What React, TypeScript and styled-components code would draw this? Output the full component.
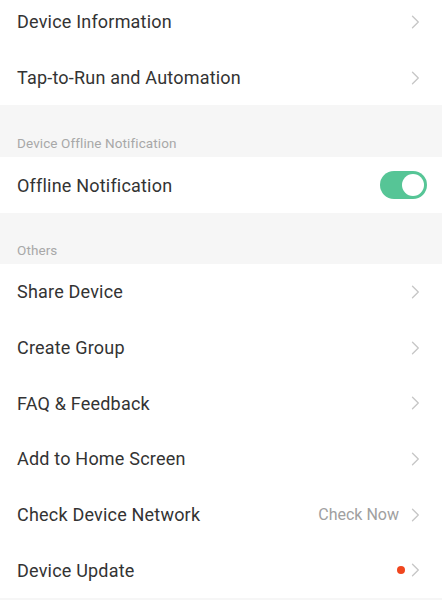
import styled, { createGlobalStyle } from 'styled-components';

const GlobalStyle = createGlobalStyle`
  html, body {
    margin: 0;
    padding: 0;
    background: #f6f6f6;
    font-family: Roboto, "Liberation Sans", Arial, sans-serif;
    overflow: hidden;
  }
`;

const Chevron = () => (
  <ChevronIcon width="9" height="14" viewBox="0 0 9 14" fill="none">
    <path d="M1.5 1.2L7.3 7L1.5 12.8" stroke="#c6c6c6" strokeWidth="1.3" strokeLinecap="round" strokeLinejoin="round" />
  </ChevronIcon>
);

type RowProps = {
  label: string;
  value?: string;
  dot?: boolean;
};

const SettingRow = ({ label, value, dot }: RowProps) => (
  <Row>
    <Label>{label}</Label>
    <Trail>
      {value && <Value>{value}</Value>}
      {dot && <Dot />}
      <Chevron />
    </Trail>
  </Row>
);

const App = () => {
  return (
    <>
      <GlobalStyle />
      <Page>
        <Group>
          <SettingRow label="Device Information" />
          <SettingRow label="Tap-to-Run and Automation" />
        </Group>
        <SectionHeader $height={52}>Device Offline Notification</SectionHeader>
        <Group>
          <Row>
            <Label>Offline Notification</Label>
            <Toggle $on>
              <Knob />
            </Toggle>
          </Row>
        </Group>
        <SectionHeader $height={51}>Others</SectionHeader>
        <Group>
          <SettingRow label="Share Device" />
          <SettingRow label="Create Group" />
          <SettingRow label="FAQ & Feedback" />
          <SettingRow label="Add to Home Screen" />
          <SettingRow label="Check Device Network" value="Check Now" />
          <SettingRow label="Device Update" dot />
        </Group>
      </Page>
    </>
  );
};

const Page = styled.div`
  display: flex;
  flex-direction: column;
  margin-top: -6px;
`;

const Group = styled.div`
  display: flex;
  flex-direction: column;
  background: #ffffff;
`;

const Row = styled.div`
  display: flex;
  align-items: center;
  justify-content: space-between;
  height: 55.7px;
  padding: 0 15px 0 17px;
  box-sizing: border-box;
`;

const Label = styled.span`
  font-size: 18px;
  letter-spacing: 0.2px;
  color: #333333;
`;

const Trail = styled.div`
  display: flex;
  align-items: center;
  margin-right: 7px;
`;

const ChevronIcon = styled.svg`
  display: block;
`;

const Value = styled.span`
  font-size: 16px;
  color: #a0a0a0;
  margin-right: 12px;
`;

const Dot = styled.span`
  width: 8px;
  height: 8px;
  border-radius: 50%;
  background: #f0461e;
  margin-right: 6px;
`;

const SectionHeader = styled.div<{ $height: number }>`
  height: ${({ $height }) => $height}px;
  display: flex;
  align-items: flex-end;
  padding: 0 17px 6px;
  box-sizing: border-box;
  font-size: 13.5px;
  letter-spacing: 0.1px;
  color: #a8a8a8;
`;

const Toggle = styled.div<{ $on?: boolean }>`
  width: 47px;
  height: 28px;
  border-radius: 14px;
  background: ${({ $on }) => ($on ? '#56c596' : '#e0e0e0')};
  display: flex;
  align-items: center;
  justify-content: ${({ $on }) => ($on ? 'flex-end' : 'flex-start')};
  padding: 0 3px;
  box-sizing: border-box;
`;

const Knob = styled.span`
  width: 22px;
  height: 22px;
  border-radius: 50%;
  background: #ffffff;
`;

export default App;
